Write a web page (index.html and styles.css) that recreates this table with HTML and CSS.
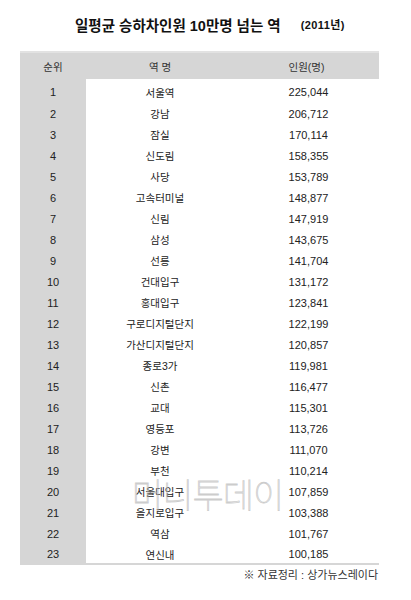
FILE: index.html
```html
<!DOCTYPE html>
<html lang="ko">
<head>
<meta charset="utf-8">
<link rel="stylesheet" href="styles.css">
</head>
<body>
<div class="page">
  <h1 class="title"><span class="main">일평균 승하차인원 10만명 넘는 역</span><span class="year">(2011년)</span></h1>
  <div class="table-wrap">
    <table class="stations">
      <thead>
        <tr><th class="rank">순위</th><th class="name">역 명</th><th class="count">인원(명)</th></tr>
      </thead>
      <tbody>
        <tr><td class="rank">1</td><td class="name">서울역</td><td class="count">225,044</td></tr>
        <tr><td class="rank">2</td><td class="name">강남</td><td class="count">206,712</td></tr>
        <tr><td class="rank">3</td><td class="name">잠실</td><td class="count">170,114</td></tr>
        <tr><td class="rank">4</td><td class="name">신도림</td><td class="count">158,355</td></tr>
        <tr><td class="rank">5</td><td class="name">사당</td><td class="count">153,789</td></tr>
        <tr><td class="rank">6</td><td class="name">고속터미널</td><td class="count">148,877</td></tr>
        <tr><td class="rank">7</td><td class="name">신림</td><td class="count">147,919</td></tr>
        <tr><td class="rank">8</td><td class="name">삼성</td><td class="count">143,675</td></tr>
        <tr><td class="rank">9</td><td class="name">선릉</td><td class="count">141,704</td></tr>
        <tr><td class="rank">10</td><td class="name">건대입구</td><td class="count">131,172</td></tr>
        <tr><td class="rank">11</td><td class="name">홍대입구</td><td class="count">123,841</td></tr>
        <tr><td class="rank">12</td><td class="name">구로디지털단지</td><td class="count">122,199</td></tr>
        <tr><td class="rank">13</td><td class="name">가산디지털단지</td><td class="count">120,857</td></tr>
        <tr><td class="rank">14</td><td class="name">종로3가</td><td class="count">119,981</td></tr>
        <tr><td class="rank">15</td><td class="name">신촌</td><td class="count">116,477</td></tr>
        <tr><td class="rank">16</td><td class="name">교대</td><td class="count">115,301</td></tr>
        <tr><td class="rank">17</td><td class="name">영등포</td><td class="count">113,726</td></tr>
        <tr><td class="rank">18</td><td class="name">강변</td><td class="count">111,070</td></tr>
        <tr><td class="rank">19</td><td class="name">부천</td><td class="count">110,214</td></tr>
        <tr><td class="rank">20</td><td class="name">서울대입구</td><td class="count">107,859</td></tr>
        <tr><td class="rank">21</td><td class="name">을지로입구</td><td class="count">103,388</td></tr>
        <tr><td class="rank">22</td><td class="name">역삼</td><td class="count">101,767</td></tr>
        <tr><td class="rank">23</td><td class="name">연신내</td><td class="count">100,185</td></tr>
      </tbody>
    </table>
    <div class="watermark" aria-hidden="true">머니투데이</div>
  </div>
  <p class="source">※ 자료정리 : 상가뉴스레이다</p>
</div>
</body>
</html>
```

FILE: styles.css
```css
* { box-sizing: border-box; }
html, body { margin: 0; padding: 0; background: #fff; }
body {
  font-family: "Liberation Sans", "Noto Sans CJK KR", sans-serif;
  color: #222;
  width: 411px;
}
.page {
  padding: 6px 32px 0 20px;
}
.title {
  margin: 0 0 9px;
  height: 36px;
  display: flex;
  align-items: center;
  padding-left: 55px;
  gap: 20px;
  font-weight: bold;
  color: #111;
}
.title .main { font-size: 14.5px; letter-spacing: 0; }
.title .year { font-size: 11px; letter-spacing: 0.4px; }
.table-wrap {
  position: relative;
  width: 359px;
}
.stations {
  width: 359px;
  border-collapse: collapse;
  table-layout: fixed;
  border-top: 2px solid #e2e2e2;
}
.stations th {
  background: #d6d6d6;
  height: 27px;
  padding: 0;
  font-weight: normal;
  font-size: 10.5px;
  color: #333;
  border-top: 1px solid #fff;
}
.stations td {
  height: 21px;
  padding: 2px 0 0;
  font-size: 11px;
  text-align: center;
  color: #222;
}
.stations tbody tr:first-child td { padding-top: 3px; height: 23px; }
.stations th.rank, .stations td.rank { width: 66px; background: #d6d6d6; }
.stations .name { width: 148px; }
.stations td.name { font-size: 10.5px; }
.stations .count { width: 145px; }
.stations td.count { padding-left: 4px; }
.stations tbody tr:last-child td { border-bottom: 2px solid #d6d6d6; }
.watermark {
  position: absolute;
  left: 112px;
  top: 418px;
  font-family: "Noto Sans CJK KR", sans-serif;
  font-size: 34px;
  font-weight: 100;
  letter-spacing: -1px;
  color: rgba(255, 255, 255, 0.3);
  -webkit-text-stroke: 0.8px rgba(160, 160, 160, 0.55);
  pointer-events: none;
}
.source {
  margin: 1px 0 0;
  width: 359px;
  text-align: right;
  font-size: 11px;
  color: #333;
  padding-right: 1px;
}
```
